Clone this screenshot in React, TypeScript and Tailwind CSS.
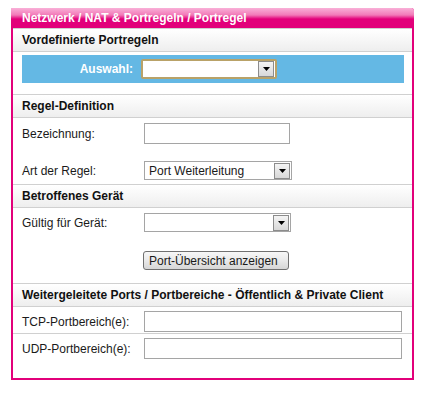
import React from 'react';

const font = { fontFamily: '"Liberation Sans", Arial, sans-serif' };

// Small XP-style dropdown arrow box
function DropArrow() {
  return (
    <span className="flex h-[16px] w-[16px] items-center justify-center border border-[#8c8c8c] bg-[linear-gradient(#f4f4f4,#d8d8d8)]">
      <svg width="7" height="4" viewBox="0 0 7 4">
        <path d="M0 0h7L3.5 4z" fill="#000" />
      </svg>
    </span>
  );
}

function SectionHeader({ title }: { title: string }) {
  return (
    <div className="flex h-[23px] items-center border-b border-[#d0d0d0] bg-[linear-gradient(#ffffff,#eeeeee)] pl-[9px] text-[12px] font-bold text-[#111]">
      {title}
    </div>
  );
}

function Select({ value, width }: { value?: string; width: string }) {
  return (
    <div className={`flex h-[19px] ${width} items-center justify-between border border-[#a5a5a5] bg-white pl-[4px] pr-[1px] text-[12px] text-[#1a1a1a]`}>
      <span>{value}</span>
      <DropArrow />
    </div>
  );
}

export default function App() {
  return (
    <div className="h-[394px] w-[424px] bg-white pl-[11px] pt-[8px]" style={font}>
      <div className="flex h-[372px] w-[403px] flex-col rounded-tr-[3px] border-x-2 border-b-2 border-[#e2007a]">
        {/* Title bar */}
        <div className="-mx-[2px] flex h-[20px] items-center rounded-tr-[3px] bg-[linear-gradient(#f9b0d8,#f27ab8_35%,#e2007a_55%,#e2007a)] pl-[11px] text-[12px] font-bold text-white">
          Netzwerk / NAT &amp; Portregeln / Portregel
        </div>
        <div className="h-[1px] bg-[#d0d0d0]" />

        <SectionHeader title="Vordefinierte Portregeln" />
        <div className="pb-[11px] pl-[9px] pr-[8px] pt-[3px]">
          <div className="flex h-[28px] items-center bg-[#64b8e4]">
            <span className="w-[111px] text-right text-[12px] font-bold text-white">Auswahl:</span>
            <div className="ml-[8px] flex h-[20px] w-[136px] items-center justify-end rounded-[2px] border-2 border-[#b9a268] bg-white pr-[1px]">
              <DropArrow />
            </div>
          </div>
        </div>
        <div className="h-[1px] bg-[#d0d0d0]" />

        <SectionHeader title="Regel-Definition" />
        <div className="flex flex-col gap-[17px] border-b border-[#d0d0d0] pb-[4px] pl-[9px] pt-[5px] text-[12px] text-[#1a1a1a]">
          <div className="flex items-center">
            <span className="w-[122px]">Bezeichnung:</span>
            <div className="h-[21px] w-[146px] border border-[#a5a5a5] bg-white" />
          </div>
          <div className="flex items-center">
            <span className="w-[122px]">Art der Regel:</span>
            <Select value="Port Weiterleitung" width="w-[148px]" />
          </div>
        </div>

        <SectionHeader title="Betroffenes Gerät" />
        <div className="flex flex-col border-b border-[#d0d0d0] pb-[13px] pl-[9px] pt-[5px] text-[12px] text-[#1a1a1a]">
          <div className="flex items-center">
            <span className="w-[122px]">Gültig für Gerät:</span>
            <Select width="w-[147px]" />
          </div>
          <div className="mt-[19px] pl-[121px]">
            <button className="flex h-[19px] w-[146px] items-center rounded-[3px] border border-[#707070] bg-[linear-gradient(#f7f7f7,#e9e9e9_50%,#d6d6d6)] pl-[5px] text-[12px] text-[#1a1a1a]">
              Port-Übersicht anzeigen
            </button>
          </div>
        </div>

        <SectionHeader title="Weitergeleitete Ports / Portbereiche - Öffentlich & Private Client" />
        <div className="flex flex-col text-[12px] text-[#1a1a1a]">
          <div className="flex items-center border-b border-[#d0d0d0] pb-[1px] pl-[9px] pt-[4px]">
            <span className="w-[122px]">TCP-Portbereich(e):</span>
            <div className="h-[21px] w-[258px] border border-[#a5a5a5] bg-white" />
          </div>
          <div className="flex items-center pl-[9px] pt-[4px]">
            <span className="w-[122px]">UDP-Portbereich(e):</span>
            <div className="h-[21px] w-[258px] border border-[#a5a5a5] bg-white" />
          </div>
        </div>
      </div>
    </div>
  );
}
